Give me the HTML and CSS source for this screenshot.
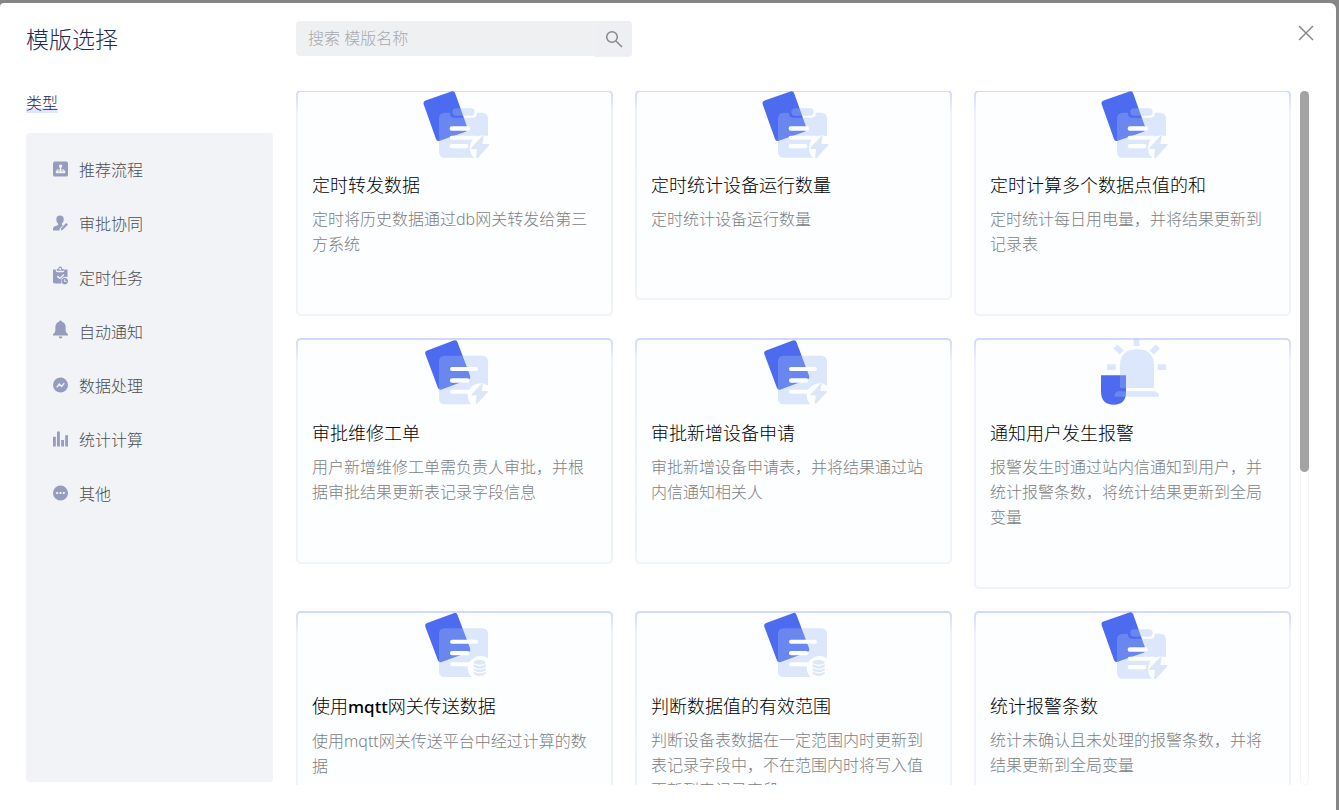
FILE: index.html
```html
<!DOCTYPE html>
<html lang="zh-CN">
<head>
<meta charset="utf-8">
<title>模版选择</title>
<link rel="stylesheet" href="styles.css">
</head>
<body>
<svg class="sprite" aria-hidden="true">
  <symbol id="bolt" viewBox="0 0 60 70">
    <path d="M36 2 3 37q-2 4 2 4h15l-3 25q2 4 6 1L57 30q2-4-2-4H36L40 4q-1-4-4-2z"/>
  </symbol>
  <symbol id="clipboard" viewBox="-2 25 270 222" overflow="visible">
    <rect class="ink" x="55" y="33" width="100" height="128" rx="9" transform="rotate(-19.5 106 98)"/>
    <path class="tint" d="M103 87h15v3q0 12 14 12h52q14 0 14-12v-3h16q18 0 18 18v52q-52-9-54 37 0 20 13 28h-88q-18 0-18-18v-99q0-18 18-18z"/>
    <rect class="tint" x="125" y="74" width="67" height="22" rx="11"/>
    <rect class="paper" x="117" y="128" width="61" height="13" rx="6"/>
    <path class="paper" d="M123 156h75v12h-75q-6 0-6-6t6-6z"/>
    <rect class="paper" x="117" y="181" width="56" height="13" rx="6"/>
    <use class="bolt" href="#bolt" x="179" y="155" width="60" height="70"/>
  </symbol>
  <symbol id="doc-base" viewBox="0 24 270 222" overflow="visible">
    <rect class="ink" x="60" y="36" width="103" height="125" rx="9" transform="rotate(-20.5 115 100)"/>
    <path class="tint" d="M102 72h112q18 0 18 18v72q-22-14-43-1-18 12-18 28 0 19 12 29h-81q-17 0-17-18V90q0-18 17-18z"/>
    <rect class="paper" x="118" y="106" width="84" height="12" rx="6"/>
    <rect class="paper" x="118" y="140" width="58" height="13" rx="6"/>
    <path class="paper" d="M124 174h56v12h-56q-6 0-6-6t6-6z"/>
  </symbol>
  <symbol id="doc-bolt" viewBox="-2 25 270 222" overflow="visible">
    <use href="#doc-base" x="0" y="24" width="270" height="222"/>
    <use class="bolt" href="#bolt" x="180" y="154" width="54" height="64"/>
  </symbol>
  <symbol id="doc-data" viewBox="-2 26 270 222" overflow="visible">
    <use href="#doc-base" x="0" y="24" width="270" height="222"/>
    <ellipse class="bolt" cx="207" cy="174" rx="18" ry="7"/>
    <path class="bolt" d="M189 180q18 11 36 0v7q-18 12-36 0zM189 191q18 11 36 0v7q-18 12-36 0zM189 202q18 11 36 0v6q-18 14-36 0z"/>
  </symbol>
  <symbol id="alarm" viewBox="6 24 270 222" overflow="visible">
    <path class="ink" d="M45 130h75v50q0 38-37 38t-38-38z"/>
    <path class="tint" d="M102 102q0-50 51-50t51 50v66H102zM97 178h110q12 3 12 16H85q0-13 12-16zM143 20h17v22h-17zM63 97h26v17H63zM215 97h25v17h-25z"/>
    <rect class="tint" x="85" y="44" width="26" height="17" transform="rotate(45 98 52)"/>
    <rect class="tint" x="193" y="44" width="26" height="17" transform="rotate(-45 206 52)"/>
  </symbol>
</svg>

<div class="dialog" role="dialog" aria-labelledby="dialog-title">
  <aside class="side">
    <h1 class="dialog-title" id="dialog-title">模版选择</h1>
    <h2 class="side-heading"><span>类型</span></h2>
    <nav class="menu">
      <button class="menu-item" type="button">
        <svg viewBox="0 0 16 16"><path fill-rule="evenodd" d="M2 0h12q2 0 2 2v12q0 2-2 2H2q-2 0-2-2V2q0-2 2-2zM6.500 3.500v3h1v2H4v1.300H3V12.500h10V9.800h-1V8.500H8.700v-2h1v-3zM5 9.500h2.500v.8H5zM8.700 9.500H11v.8H8.700z"/></svg>推荐流程
      </button>
      <button class="menu-item" type="button">
        <svg viewBox="0 0 16 16"><path d="M7.500 0q4 0 4 4.200 0 2.600-2 4.400-.8 1 .6 1.500l.5.300L7 14v2H0v-2q0-2 2-2.600l3-1q1.200-.8.300-1.800Q3.500 7 3.500 4.200 3.500 0 7.500 0zM14 8l2 1.700-5.500 5.500-2.300.8.500-2.500z"/></svg>审批协同
      </button>
      <button class="menu-item raised" type="button">
        <svg viewBox="0 0 16 19"><path fill-rule="evenodd" d="M0 3h3v1.500Q3 6 4.500 6h6Q12 6 12 4.500V3h3.500v8q-6-1-7 4 0 1.500.5 3H1.500Q0 18 0 16.500zM5 9.500 4 11l3.500 2.500L12 9l-1-1-3.600 3.500z"/><path fill-rule="evenodd" d="M4 2.500h1.500Q6 0 7.700 0T10 2.500h1.500v2H4zM7.700 1.500a1 1 0 1 0 .1 0zM12.500 12a3.500 3.500 0 1 0 .1 0zM12 13.500h1v2h1.500v1H12z"/></svg>定时任务
      </button>
      <button class="menu-item" type="button">
        <svg class="bell" viewBox="0 0 16 19"><path d="M8 0q1.200 0 1.500 1.300Q13.500 2.500 13.500 7v4q.5 2 2.500 3.500V16H0v-1.500Q2 13 2.500 11V7q0-4.500 4-5.700Q6.800 0 8 0zM6 17h4q-.3 2-2 2t-2-2z"/></svg>自动通知
      </button>
      <button class="menu-item" type="button">
        <svg viewBox="0 0 16 16"><circle cx="8" cy="8" r="8"/><path class="mark" d="M4 10.500 6.700 7l2.500 2.500L12 6"/></svg>数据处理
      </button>
      <button class="menu-item" type="button">
        <svg viewBox="0 0 16 16"><path d="M0 5.500h3V16H0zM4.300 0h3v16h-3zM8.700 9h3v7h-3zM13 4h3v12h-3z"/></svg>统计计算
      </button>
      <button class="menu-item" type="button">
        <svg viewBox="0 0 16 16"><circle cx="8" cy="8" r="8"/><path class="dots" d="M3.500 7h2v2h-2zM7 7h2v2H7zM10.500 7h2v2h-2z"/></svg>其他
      </button>
    </nav>
  </aside>

  <main class="main">
    <header class="toolbar">
      <form class="search" role="search">
        <input class="search-input" type="text" placeholder="搜索 模版名称" aria-label="搜索 模版名称">
        <button class="search-button" type="button" aria-label="搜索">
          <svg viewBox="0 0 16 16"><circle cx="6" cy="6" r="5.300"/><path d="m10 10 6 6"/></svg>
        </button>
      </form>
      <button class="close" type="button" aria-label="关闭">
        <svg viewBox="0 0 14 14"><path d="m0 0 14 14M14 0 0 14"/></svg>
      </button>
    </header>

    <div class="content">
      <div class="scroller">
        <div class="cards">
          <article class="card">
            <svg class="card-icon"><use href="#clipboard"/></svg>
            <h3 class="card-title">定时转发数据</h3>
            <p class="card-text">定时将历史数据通过db网关转发给第三方系统</p>
          </article>
          <article class="card">
            <svg class="card-icon"><use href="#clipboard"/></svg>
            <h3 class="card-title">定时统计设备运行数量</h3>
            <p class="card-text">定时统计设备运行数量</p>
          </article>
          <article class="card">
            <svg class="card-icon"><use href="#clipboard"/></svg>
            <h3 class="card-title">定时计算多个数据点值的和</h3>
            <p class="card-text">定时统计每日用电量，并将结果更新到记录表</p>
          </article>
          <article class="card">
            <svg class="card-icon"><use href="#doc-bolt"/></svg>
            <h3 class="card-title">审批维修工单</h3>
            <p class="card-text">用户新增维修工单需负责人审批，并根据审批结果更新表记录字段信息</p>
          </article>
          <article class="card">
            <svg class="card-icon"><use href="#doc-bolt"/></svg>
            <h3 class="card-title">审批新增设备申请</h3>
            <p class="card-text">审批新增设备申请表，并将结果通过站内信通知相关人</p>
          </article>
          <article class="card">
            <svg class="card-icon"><use href="#alarm"/></svg>
            <h3 class="card-title">通知用户发生报警</h3>
            <p class="card-text">报警发生时通过站内信通知到用户，并统计报警条数，将统计结果更新到全局变量</p>
          </article>
          <article class="card">
            <svg class="card-icon"><use href="#doc-data"/></svg>
            <h3 class="card-title">使用<b>mqtt</b>网关传送数据</h3>
            <p class="card-text">使用mqtt网关传送平台中经过计算的数据</p>
          </article>
          <article class="card">
            <svg class="card-icon"><use href="#doc-data"/></svg>
            <h3 class="card-title">判断数据值的有效范围</h3>
            <p class="card-text">判断设备表数据在一定范围内时更新到表记录字段中，不在范围内时将写入值更新到表记录字段</p>
          </article>
          <article class="card">
            <svg class="card-icon"><use href="#clipboard"/></svg>
            <h3 class="card-title">统计报警条数</h3>
            <p class="card-text">统计未确认且未处理的报警条数，并将结果更新到全局变量</p>
          </article>
        </div>
      </div>
      <div class="track"><div class="thumb"></div></div>
    </div>
  </main>
</div>
</body>
</html>
```
FILE: styles.css
```css
* {
  box-sizing: border-box;
}

body {
  margin: 0;
  height: 100vh;
  padding: 3px 3px 0 0;
  overflow: hidden;
  background: #868686;
  font-family: "Noto Sans", "Noto Sans CJK SC", sans-serif;
  font-size: 16px;
  font-weight: 300;
}

h1, h2, h3, p {
  margin: 0;
  font-weight: 300;
}

button, input {
  border: 0;
  padding: 0;
  font: inherit;
}

button {
  cursor: pointer;
}

.sprite {
  position: absolute;
  width: 0;
  height: 0;
}

.dialog {
  display: grid;
  grid-template-columns: 247px minmax(0, 1fr);
  column-gap: 23px;
  height: 100%;
  padding: 18px 27px 25px 26px;
  border-radius: 4px 6px 0 0;
  background: #fff;
}

.side {
  display: flex;
  flex-direction: column;
  min-height: 0;
  padding-bottom: 3px;
}

.dialog-title {
  color: #1f2a56;
  font-size: 23px;
  line-height: 36px;
}

.side-heading {
  margin: 34px 0 18px;
  color: #1f2a56;
  font-size: 16px;
  line-height: 24px;
}

.side-heading span {
  background: linear-gradient(#dfe6fd, #dfe6fd) 0 16px / 100% 5px no-repeat;
}

.menu {
  flex: 1;
  display: flex;
  flex-direction: column;
  padding: 9px 0;
  border-radius: 4px;
  background: #f1f3f7;
}

.menu-item {
  display: flex;
  align-items: center;
  gap: 11px;
  height: 54px;
  padding: 0 27px;
  background: none;
  color: #4c4e52;
}

.menu-item svg {
  width: 15px;
  height: 16px;
  fill: #959cbd;
}

.menu-item.raised svg,
.menu-item .bell {
  height: 19px;
  margin-bottom: 4px;
}

.menu-item .mark {
  fill: none;
  stroke: #f1f3f7;
  stroke-width: 1.5;
}

.menu-item .dots {
  fill: #f1f3f7;
}

.main {
  display: flex;
  flex-direction: column;
  min-width: 0;
  min-height: 0;
}

.toolbar {
  display: flex;
  justify-content: space-between;
  align-items: flex-start;
  height: 70px;
}

.search {
  display: flex;
  width: 336px;
  height: 35px;
}

.search-input {
  flex: 1;
  min-width: 0;
  padding: 0 12px 2px;
  border-radius: 4px 0 0 4px;
  background: #eff0f2;
  color: #606266;
}

.search-input::placeholder {
  color: #a6a9ae;
}

.search-button {
  display: grid;
  place-items: center;
  width: 37px;
  height: 36px;
  border-radius: 0 4px 4px 0;
  background: #edeff2;
}

.search-button svg {
  width: 16px;
  height: 16px;
  overflow: visible;
  fill: none;
  stroke: #85878c;
  stroke-width: 1.5;
}

.close {
  display: grid;
  place-items: center;
  width: 24px;
  height: 24px;
  margin-right: -9px;
  background: none;
}

.close svg {
  width: 14px;
  height: 14px;
  overflow: visible;
  stroke: #888;
  stroke-width: 1.5;
}

.content {
  flex: 1;
  display: flex;
  gap: 9px;
  min-height: 0;
}

.scroller {
  flex: 1;
  min-width: 0;
  overflow-y: auto;
  scrollbar-width: none;
}

.cards {
  display: grid;
  grid-template-columns: repeat(3, minmax(0, 1fr));
  align-items: start;
  gap: 22px;
  margin-top: -1px;
}

.card {
  min-height: 210px;
  padding: 0 14px 57px;
  border: 2px solid transparent;
  border-radius: 5px;
  background:
    linear-gradient(#fcfeff, #fcfeff) padding-box,
    linear-gradient(#d0d8fd, #f0f2fe 24px) border-box;
}

.card-icon {
  display: block;
  width: 90px;
  height: 74px;
  margin: 0 auto 5px;
  overflow: visible;
}

.ink {
  fill: #4c6bee;
}

.tint {
  fill: #a3bdf3;
  fill-opacity: 0.35;
}

.paper {
  fill: #fcfeff;
}

.bolt {
  fill: #dde6f9;
}

.card-title {
  color: #000;
  font-size: 18px;
  line-height: 28px;
}

.card-title b {
  font-size: 17px;
  font-weight: 500;
}

.card-text {
  margin-top: 8px;
  color: #7c7e82;
  line-height: 25px;
}

.track {
  width: 9px;
  border: 1px solid #f5f5f7;
  border-radius: 5px;
}

.thumb {
  width: 9px;
  height: 55%;
  margin: -1px;
  border-radius: 5px;
  background: #a3a3a3;
}
```
